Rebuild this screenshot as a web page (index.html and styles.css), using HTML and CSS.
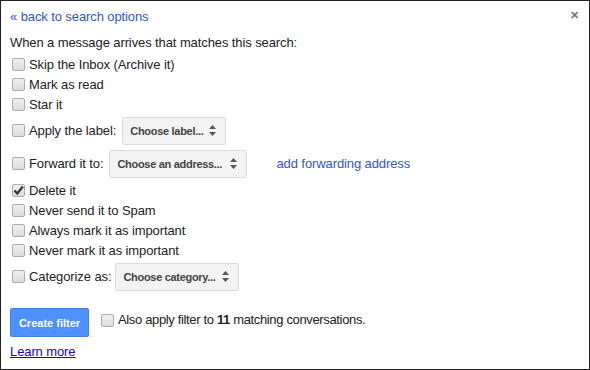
FILE: index.html
```html
<!DOCTYPE html>
<html lang="en">
<head>
  <meta charset="UTF-8" />
  <title>Create filter</title>
  <link rel="stylesheet" href="styles.css">
</head>
<body>
  <div class="filter-box">
    <span class="close-btn">&#10005;</span>

    <a href="#" class="back-link">&laquo; back to search options</a>
    <p class="intro">When a message arrives that matches this search:</p>

    <ul class="actions">
      <li class="row"><span class="check"></span>Skip the Inbox (Archive it)</li>
      <li class="row"><span class="check"></span>Mark as read</li>
      <li class="row"><span class="check"></span>Star it</li>
      <li class="row tall">
        <span class="check"></span>Apply the label:
        <span class="picker label-pick"><span>Choose label...</span><svg class="arrows" width="7" height="11" viewBox="0 0 7 11"><path d="M3.5 0L7 4H0z M3.5 11L0 7h7z" fill="#555"/></svg></span>
      </li>
      <li class="row tall">
        <span class="check"></span>Forward it to:
        <span class="picker address-pick"><span>Choose an address...</span><svg class="arrows" width="7" height="11" viewBox="0 0 7 11"><path d="M3.5 0L7 4H0z M3.5 11L0 7h7z" fill="#555"/></svg></span>
        <a href="#" class="fwd-link">add forwarding address</a>
      </li>
      <li class="row"><span class="check checked"><svg width="11" height="11" viewBox="0 0 11 11"><path d="M1.5 5.5l2.8 3L9.8 1.5" fill="none" stroke="#333" stroke-width="2.2"/></svg></span>Delete it</li>
      <li class="row"><span class="check"></span>Never send it to Spam</li>
      <li class="row"><span class="check"></span>Always mark it as important</li>
      <li class="row"><span class="check"></span>Never mark it as important</li>
      <li class="row tall">
        <span class="check"></span>Categorize as:
        <span class="picker category-pick"><span>Choose category...</span><svg class="arrows" width="7" height="11" viewBox="0 0 7 11"><path d="M3.5 0L7 4H0z M3.5 11L0 7h7z" fill="#555"/></svg></span>
      </li>
    </ul>

    <div class="submit-row">
      <button class="create-btn">Create filter</button>
      <span class="check also-check"></span>
      <span class="also">Also apply filter to <b>11</b> matching conversations.</span>
    </div>

    <a href="#" class="learn-link">Learn more</a>
  </div>
</body>
</html>
```

FILE: styles.css
```css
body {
  margin: 0;
  font-family: "Liberation Sans", Arial, sans-serif;
  font-size: 13px;
  color: #222;
  background: #fff;
}

.filter-box {
  position: relative;
  width: 590px;
  height: 370px;
  box-sizing: border-box;
  border: 1px solid #222;
  padding: 6px 9px 0 9px;
  letter-spacing: -0.1px;
}

.close-btn {
  position: absolute;
  top: 8px;
  right: 10px;
  font-size: 11px;
  font-weight: bold;
  color: #777;
}

.back-link {
  display: block;
  line-height: 20px;
  color: #3355cc;
  text-decoration: none;
}

.intro {
  margin: 6px 0 0 0;
  line-height: 20px;
}

/* Action list */
.actions {
  list-style: none;
  margin: 1px 0 0 0;
  padding: 0;
}

.row {
  display: flex;
  align-items: center;
  height: 20px;
  white-space: nowrap;
}

.row.tall {
  height: 33px;
}

.check {
  display: inline-flex;
  align-items: center;
  justify-content: center;
  width: 11px;
  height: 11px;
  margin: 0 4px 0 2px;
  border: 1px solid #adadad;
  border-radius: 2px;
  background: linear-gradient(#f0f0f0, #dcdcdc);
  flex-shrink: 0;
}

.check svg {
  display: block;
}

.picker {
  display: inline-flex;
  align-items: center;
  justify-content: space-between;
  box-sizing: border-box;
  height: 28px;
  margin-left: 6px;
  padding: 0 9px 0 7px;
  border: 1px solid #dcdcdc;
  border-radius: 2px;
  background: #f3f3f3;
  color: #444;
  font-size: 11px;
  font-weight: bold;
  letter-spacing: -0.3px;
  white-space: nowrap;
  overflow: hidden;
}

.arrows {
  margin-left: 5px;
  flex-shrink: 0;
}

.label-pick { width: 104px; }
.address-pick { width: 138px; }
.category-pick { width: 124px; margin-left: 4px; }

.fwd-link {
  margin-left: 29px;
  color: #3355cc;
  text-decoration: none;
}

/* Bottom */
.submit-row {
  display: flex;
  align-items: flex-start;
  margin-top: 15px;
}

.create-btn {
  width: 79px;
  height: 29px;
  padding: 0;
  border: 1px solid #3d82f0;
  border-radius: 2px;
  background: #4d90fe;
  color: #fff;
  font-family: inherit;
  font-size: 11px;
  font-weight: bold;
}

.also-check {
  margin: 6px 4px 0 12px;
}

.also {
  line-height: 20px;
  margin-top: 2px;
  letter-spacing: -0.35px;
}

.learn-link {
  display: inline-block;
  margin-top: 5px;
  line-height: 20px;
  color: #2200cc;
}
```
